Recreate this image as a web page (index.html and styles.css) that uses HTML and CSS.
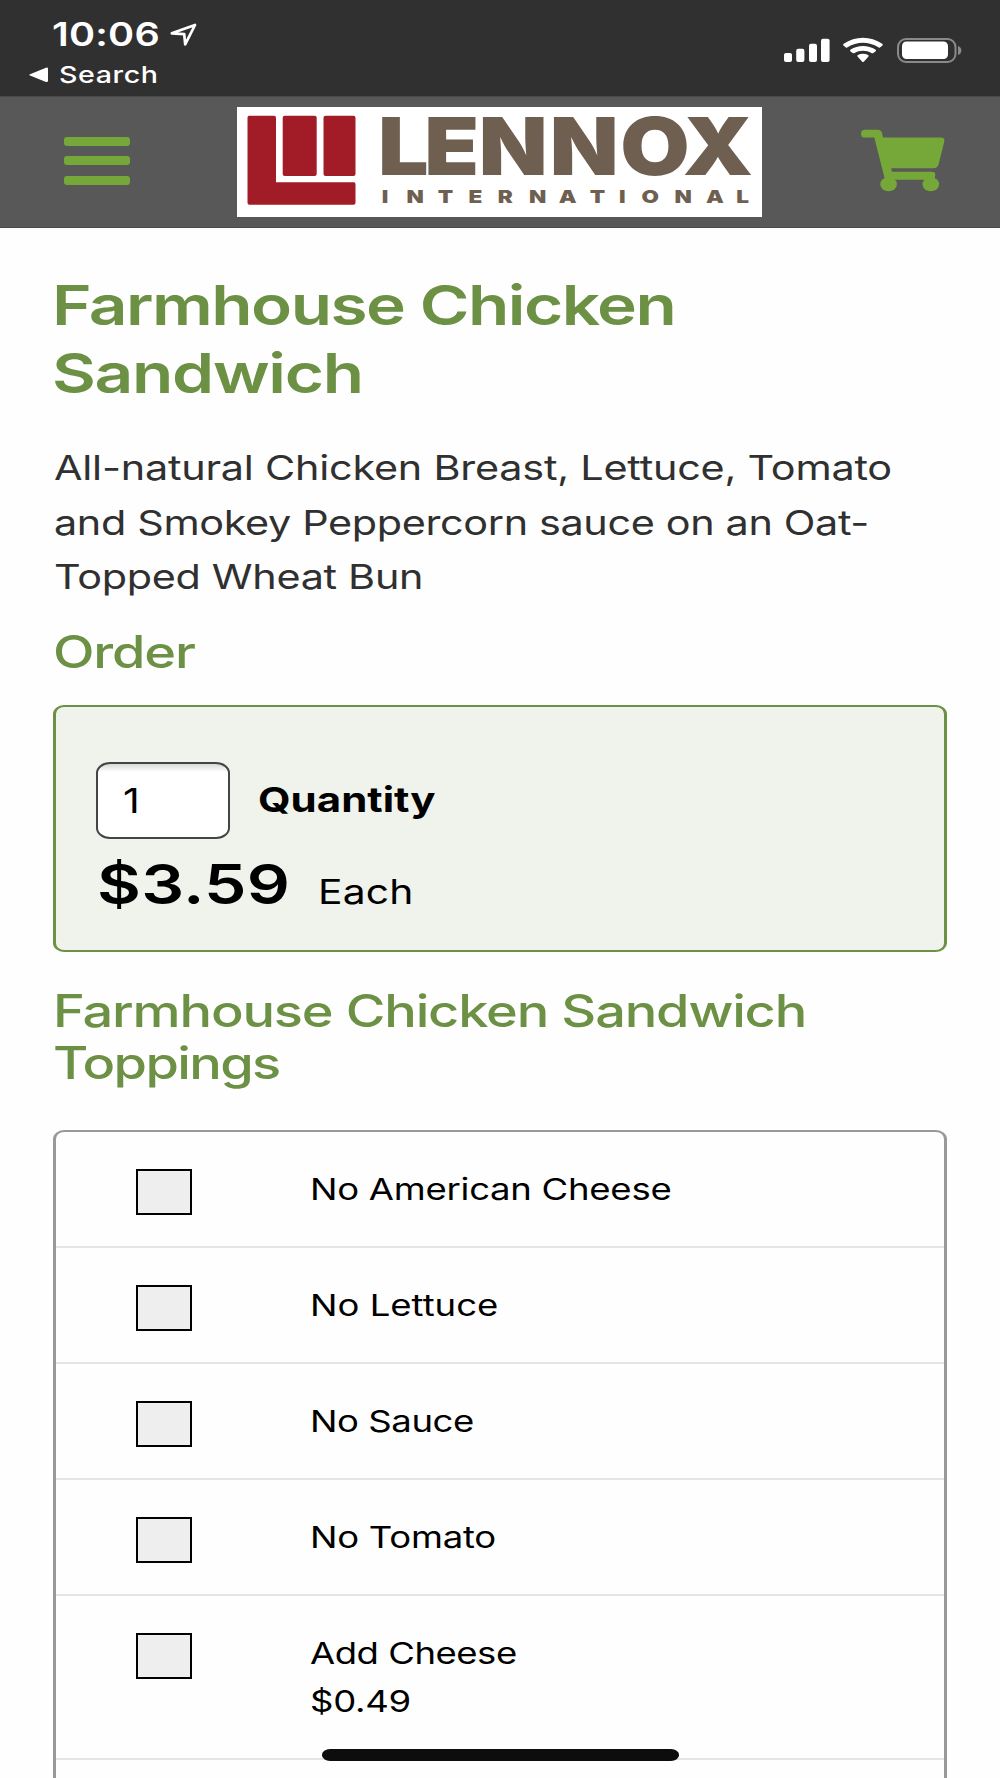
FILE: index.html
```html
<!DOCTYPE html>
<html lang="en">
<head>
<meta charset="utf-8">
<title>Farmhouse Chicken Sandwich</title>
<link rel="stylesheet" href="styles.css">
</head>
<body>
<div class="screen">
  <div class="status">
    <div class="status-left">
      <div class="clock">
        <span class="wide time">10:06</span>
        <svg class="location" width="28" height="24" viewBox="0 0 28 24"><path d="M1.8 10.3 25 2 15.2 21.3 14.2 11.2Z" fill="none" stroke="#fff" stroke-width="2.7" stroke-linejoin="round"/></svg>
      </div>
      <div class="back">
        <svg width="20" height="16" viewBox="0 0 20 16"><path d="M1 7.3 17 .7Q19 .2 19 2V13.5Q19 15.5 17 14.9L1 8.6Q-.5 8 1 7.3Z" fill="#fff"/></svg>
        <span class="wide back-label">Search</span>
      </div>
    </div>
    <svg class="indicators" width="180" height="28" viewBox="0 0 180 28">
      <g fill="#fff">
        <rect x="1" y="17" width="8" height="9" rx="2"/>
        <rect x="13.2" y="12.8" width="8.2" height="13.2" rx="2"/>
        <rect x="26" y="7.8" width="8" height="18.2" rx="2"/>
        <rect x="38" y="2.8" width="8.6" height="23.2" rx="2"/>
        <g transform="translate(.7 .8)">
          <path d="M60 8.9Q58.8 8 60 7C71.5-1 87-1 98.5 7Q99.7 8 98.5 8.9L96.3 10.600Q95.500 11.100 94.600 10.500C85.500 4.400 73 4.400 63.900 10.500Q63 11.100 62.200 10.600Z"/>
          <path d="M66.800 14.600Q65.700 13.700 66.900 12.800C74.200 8 84.400 8 91.700 12.800Q92.900 13.700 91.800 14.600L89.600 16.200Q88.700 16.800 87.700 16.200C82.800 13.300 75.800 13.300 70.900 16.200Q69.900 16.800 69 16.200Z"/>
          <path d="M74 20Q73 19 74.200 18.300C77.300 16.500 81.300 16.500 84.400 18.300Q85.600 19 84.600 20L80.300 24.700Q79.300 25.800 78.300 24.700Z"/>
        </g>
        <rect x="119" y="5.500" width="46" height="17.500" rx="4.500"/>
      </g>
      <rect x="115" y="3" width="57.500" height="23" rx="8" fill="none" stroke="#8a8a8a" stroke-width="2"/>
      <path d="M175 10C179.500 11.500 179.500 17.500 175 19Z" fill="#8a8a8a"/>
    </svg>
  </div>

  <header class="nav">
    <div class="menu"><i></i><i></i><i></i></div>
    <svg class="logo" width="525" height="110" viewBox="0 0 525 110">
      <rect width="525" height="110" fill="#fff"/>
      <g fill="#a21c28">
        <path d="M12 8.700H37Q39 8.700 39 10.700V75.300H117Q118.500 75.300 118.500 77.300V95.700Q118.500 97.700 116.500 97.700H12.500Q10.500 97.700 10.500 95.700V10.700Q10.500 8.700 12 8.700Z"/>
        <rect x="45.700" y="8.700" width="34" height="60.300" rx="2"/>
        <rect x="86.500" y="8.700" width="32" height="60.300" rx="2"/>
      </g>
      <g class="wordmark">
        <text class="name" transform="translate(0 68) scale(1.120 1)" x="125.800 167.300 215.900 279.300 342.200 398" y="0">LENNOX</text>
        <text class="sub" transform="translate(0 96.200) scale(1.250 1)" x="115.800 135.700 160.700 185.200 208.600 233.700 257.500 282.200 305.600 323.600 350 375.200 399.500" y="0">INTERNATIONAL</text>
      </g>
    </svg>
    <svg class="cart" width="86" height="64" viewBox="0 0 86 64">
      <g fill="#75a838">
        <path d="M5 .800H18Q21.500 .800 22.200 4.500L23 8.600H81Q85 8.600 84.300 12.600L78.500 35.600Q77.500 39.300 73.500 39.300H31.300L31.900 42.700H71.500Q75.500 42.700 75.300 46L74.500 50.800H25L14.300 8.600H5Q1 8.600 1 4.700T5 .800Z"/>
        <ellipse cx="28.600" cy="55.300" rx="8.300" ry="7"/>
        <ellipse cx="70.800" cy="55.300" rx="8.300" ry="7"/>
      </g>
    </svg>
  </header>

  <main>
    <h1>
      <span class="wide t1">Farmhouse Chicken</span>
      <span class="wide t2">Sandwich</span>
    </h1>
    <p class="description">
      <span class="wide">All-natural Chicken Breast, Lettuce, Tomato</span>
      <span class="wide d2">and Smokey Peppercorn sauce on an Oat-</span>
      <span class="wide d3">Topped Wheat Bun</span>
    </p>
    <h2><span class="wide">Order</span></h2>
    <section class="order">
      <div class="quantity">
        <div class="field"><span class="wide">1</span></div>
        <span class="wide label">Quantity</span>
      </div>
      <div class="pricing">
        <span class="wide price">$3.59</span>
        <span class="wide unit">Each</span>
      </div>
    </section>
    <h2 class="toppings-title">
      <span class="wide">Farmhouse Chicken Sandwich</span>
      <span class="wide t3">Toppings</span>
    </h2>
    <ul class="toppings">
      <li><i class="box"></i><div><span class="wide">No American Cheese</span></div></li>
      <li><i class="box"></i><div><span class="wide lettuce">No Lettuce</span></div></li>
      <li><i class="box"></i><div><span class="wide sauce">No Sauce</span></div></li>
      <li><i class="box"></i><div><span class="wide">No Tomato</span></div></li>
      <li><i class="box"></i><div><span class="wide add">Add Cheese</span><span class="wide">$0.49</span></div></li>
      <li></li>
    </ul>
  </main>
  <div class="home-bar"></div>
</div>
</body>
</html>
```
FILE: styles.css
```css
* { box-sizing: border-box; margin: 0; padding: 0; }
body { background: #fefefe; font-family: Inter, "Liberation Sans", sans-serif; color: #000; }
.screen { position: relative; width: 1000px; height: 1778px; overflow: hidden; }

/* Extended-width lettering */
.wide { display: block; width: max-content; white-space: nowrap; transform: scaleX(1.217); transform-origin: 0 50%; }

.status { height: 96px; background: #303030; color: #fff; display: flex; justify-content: space-between; }
.status-left { padding: 15px 0 0 29px; }
.clock { display: flex; height: 40px; padding-left: 23px; }
.time { width: 118px; font-size: 32.5px; line-height: 40px; font-weight: 600; letter-spacing: .18px; }
.location { margin-top: 8px; }
.back { display: flex; height: 34px; align-items: flex-start; gap: 10px; }
.back svg { margin-top: 12px; }
.back-label { font-size: 23.5px; line-height: 34px; font-weight: 500; letter-spacing: .5px; margin-top: 3px; }
.indicators { margin: 36px 37px 0 0; }

.nav { height: 131.5px; background: #585858; border-top: 1px solid #4a4a4a; border-bottom: 1px solid #4a4a4a; display: flex; align-items: flex-start; }
.menu { display: flex; flex-direction: column; gap: 10.3px; margin: 40px 107px 0 64px; width: 66px; }
.menu i { height: 9px; border-radius: 3px; background: #75a838; }
.logo { margin-top: 10px; overflow: visible; }
.wordmark { fill: #6f5f51; font-weight: 900; }
.name { font-size: 80px; }
.sub { font-size: 18px; }
.cart { margin: 32px 0 0 97.5px; }

main { padding: 43px 53px 0; }
h1 { color: #6c9144; font-size: 55.5px; line-height: 68px; font-weight: 600; }
h1 .wide { margin-left: -1px; }
.t1 { letter-spacing: -1.28px; }
.t2 { letter-spacing: -1.08px; }
.description { margin-top: 34.5px; padding-left: 1px; color: #303030; font-size: 34px; line-height: 54.7px; letter-spacing: -.19px; }
.d2 { letter-spacing: -.3px; }
.d3 { letter-spacing: -.26px; }
h2 { margin-top: 21px; color: #6c9144; font-size: 44.5px; line-height: 52.5px; font-weight: 500; letter-spacing: -.97px; }
h2 .wide { margin-left: -.5px; }
.t3 { letter-spacing: -1.35px; }

.order { margin-top: 26.5px; height: 247px; padding: 55px 40px 0; background: #f0f3eb; border: 2px solid #6c9144; border-width: 2px 3px 2px 3px; border-radius: 11px / 9px; }
.quantity { display: flex; align-items: center; gap: 28px; }
.field { width: 133.5px; height: 76.5px; padding: 0 0 0 25px; background: linear-gradient(#d8d8d8, #fff 8px); border: 2px solid #444; border-radius: 14px / 11px; font-size: 34px; line-height: 73px; }
.label { font-size: 34.5px; line-height: 76px; font-weight: 700; letter-spacing: 0; }
.pricing { display: flex; align-items: baseline; padding: 11px 0 0 1px; }
.price { width: 221px; font-size: 55.5px; line-height: 68px; font-weight: 600; letter-spacing: .2px; }
.unit { font-size: 33.5px; letter-spacing: .15px; }

.toppings-title { margin-top: 32.5px; }
.toppings { margin-top: 40px; height: 700px; list-style: none; border: 2px solid #999; border-width: 2px 3px; border-radius: 11px / 9px; }
.toppings li { display: flex; align-items: flex-start; padding: 33px 0 33px 80px; border-bottom: 2px solid #e4e4e4; font-size: 30px; line-height: 48px; letter-spacing: -.22px; }
.toppings li:last-child { border-bottom: 0; }
.box { width: 56px; height: 46px; margin: 4px 118px -4px 0; background: #eee; border: 2px solid #000; }
.toppings .lettuce { letter-spacing: 0; }
.toppings .sauce { letter-spacing: -.36px; }
.toppings .add { letter-spacing: -.4px; }

/* Floats above the scrolled page */
.home-bar { position: absolute; left: 322px; top: 1749px; width: 357px; height: 11.5px; border-radius: 8px / 5.75px; background: #0d0d0d; }
```
